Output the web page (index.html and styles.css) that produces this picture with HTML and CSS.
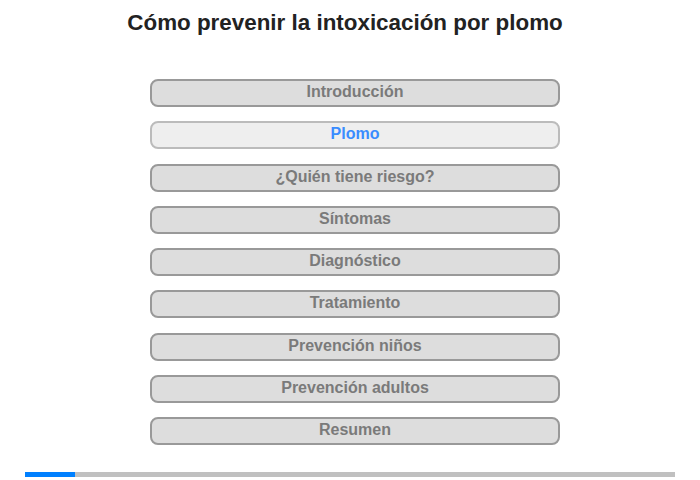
FILE: index.html
```html
<!DOCTYPE html>
<html lang="es">
<head>
<meta charset="UTF-8" />
<meta name="viewport" content="width=device-width, initial-scale=1" />
<title>Cómo prevenir la intoxicación por plomo</title>
<link rel="stylesheet" href="styles.css">
</head>
<body>

  <h1 class="title">Cómo prevenir la intoxicación por plomo</h1>

  <div class="menu">
    <button class="menu-btn">Introducción</button>
    <button class="menu-btn active">Plomo</button>
    <button class="menu-btn">¿Quién tiene riesgo?</button>
    <button class="menu-btn">Síntomas</button>
    <button class="menu-btn">Diagnóstico</button>
    <button class="menu-btn">Tratamiento</button>
    <button class="menu-btn">Prevención niños</button>
    <button class="menu-btn">Prevención adultos</button>
    <button class="menu-btn">Resumen</button>
  </div>

  <div class="progress">
    <div class="progress-fill" style="width: 7.7%"></div>
  </div>

</body>
</html>
```

FILE: styles.css
```css
body {
  margin: 0;
  font-family: "Liberation Sans", Arial, sans-serif;
  background: #fff;
}

.title {
  margin: 0;
  padding: 10px 10px 0 0;
  font-size: 22.4px;
  line-height: 26px;
  font-weight: bold;
  color: #222;
  text-align: center;
}

.menu {
  display: flex;
  flex-direction: column;
  gap: 14.25px;
  width: 410px;
  margin: 43px 0 0 150px;
}

.menu-btn {
  box-sizing: border-box;
  height: 28px;
  padding: 0 0 2px;
  font-family: inherit;
  font-size: 16px;
  line-height: 22px;
  font-weight: bold;
  color: #7a7a7a;
  background: #dddddd;
  border: 2px solid #999;
  border-radius: 8px;
  text-align: center;
}

.menu-btn.active {
  color: #3a8cff;
  background: #eeeeee;
  border-color: #bbb;
}

/* progress along the bottom */
.progress {
  height: 5px;
  margin: 27px 25px 0;
  background: #c0c0c0;
}

.progress-fill {
  height: 100%;
  background: #0080ff;
}
```
